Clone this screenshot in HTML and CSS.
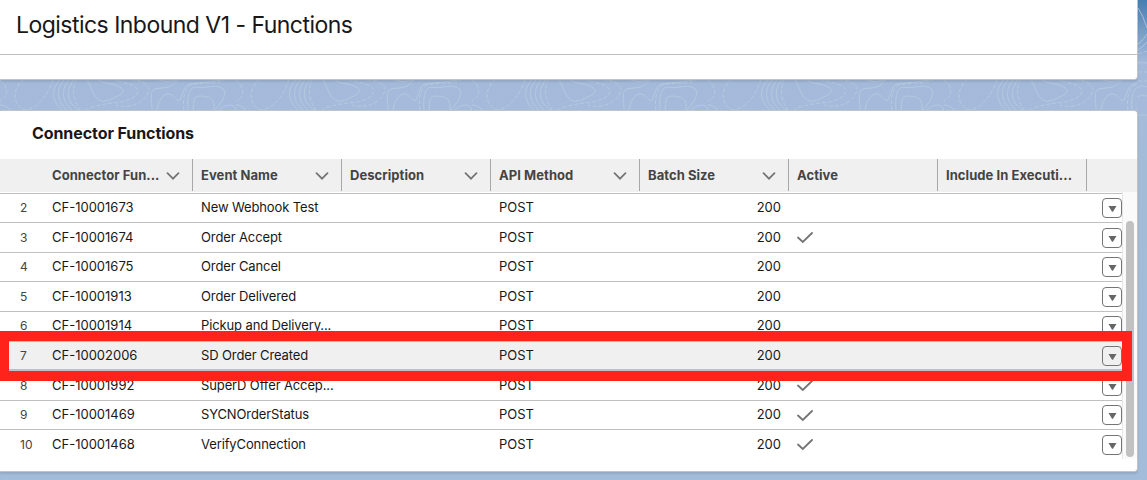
FILE: index.html
```html
<!DOCTYPE html>
<html lang="en">
<head>
    <meta charset="UTF-8">
    <meta name="viewport" content="width=device-width, initial-scale=1.0">
    <title>Logistics Inbound V1 - Functions</title>
    <link rel="stylesheet" href="styles.css">
</head>
<body>
    <!-- Contour line background -->
    <svg class="contours" width="1147" height="140">
        <defs>
            <pattern id="contour" width="236" height="120" patternUnits="userSpaceOnUse">
                <g fill="none" stroke="#b5cade" stroke-width="0.9">
                    <path d="M61 79C51 87 51 101 62 110M65 79C56 88 56 101 67 110M70 79C61 88 61 101 72 110M75 79C66 88 65 102 79 110"/>
                    <path d="M87 79C91 86 93 98 101 101C109 102 112 98 118 96C128 91 122 87 112 84C104 83 101 82 98 79"/>
                    <path d="M152 110C152 100 149 91 155 89C163 87 171 90 178 79M157 110C158 102 162 94 169 94C175 95 177 103 180 100C184 92 183 86 190 84C203 82 215 82 224 79"/>
                    <path d="M188 110C187 99 188 88 195 87C203 89 212 85 220 87C230 91 222 102 215 110M193 110C194 100 193 96 200 96C208 97 215 96 214 110"/>
                    <path d="M219 110C226 103 235 104 236 110M0 105C5 105 8 108 10 110M157 79C165 83 173 82 177 79"/>
                    <g stroke-dasharray="4 2">
                        <path d="M24 79C13 86 11 105 25 110C38 109 49 94 53 79M77 79C71 88 73 100 80 110M112 79C121 83 136 83 138 91C138 98 123 103 111 103C99 105 90 107 86 110M125 79C140 80 149 83 149 90C145 105 126 109 116 105"/>
                        <path d="M184 110C182 100 185 87 191 85C207 81 216 86 226 79M0 80C10 88 8 97 0 101"/>
                    </g>
                </g>
            </pattern>
        </defs>
        <rect width="1137" height="111" fill="url(#contour)"/>
        <g fill="none" stroke="#b5cade" stroke-width="0.8">
            <path d="M1138 8Q1143 15 1147 28M1138 44Q1144 40 1147 34M1138 50Q1144 46 1147 42M1138 63Q1142 62 1147 63M1137 88Q1142 84 1147 87M1137 97Q1142 94 1147 96M1138 115H1147"/>
            <path stroke-dasharray="4 2" d="M1138 54L1147 51M1138 72H1147M1138 81H1147"/>
        </g>
    </svg>

    <!-- Page Header -->
    <header class="page-header">
        <h1>Logistics Inbound V1 - Functions</h1>
    </header>

    <!-- Connector Functions -->
    <section class="card">
        <h2>Connector Functions</h2>
        <div class="row table-head">
            <span class="cell"></span>
            <span class="cell">Connector Fun...<svg class="chevron" viewBox="0 0 14 8"><path d="M1.5 1.2L7 6.7L12.5 1.2"/></svg></span>
            <span class="cell">Event Name<svg class="chevron" viewBox="0 0 14 8"><path d="M1.5 1.2L7 6.7L12.5 1.2"/></svg></span>
            <span class="cell">Description<svg class="chevron" viewBox="0 0 14 8"><path d="M1.5 1.2L7 6.7L12.5 1.2"/></svg></span>
            <span class="cell">API Method<svg class="chevron" viewBox="0 0 14 8"><path d="M1.5 1.2L7 6.7L12.5 1.2"/></svg></span>
            <span class="cell">Batch Size<svg class="chevron" viewBox="0 0 14 8"><path d="M1.5 1.2L7 6.7L12.5 1.2"/></svg></span>
            <span class="cell">Active</span>
            <span class="cell">Include In Executi...</span>
            <span class="cell"></span>
        </div>
        <div class="table-body">
            <div class="rows" id="functionList">
                <!-- Rows are added by the script -->
            </div>
            <div class="scrollbar"><div class="thumb"></div></div>
        </div>
    </section>

    <div class="highlight"></div>

    <script>
        const functionList = document.getElementById('functionList');

        const functions = [
            { id: 'CF-10001673', event: 'New Webhook Test', active: false },
            { id: 'CF-10001674', event: 'Order Accept', active: true },
            { id: 'CF-10001675', event: 'Order Cancel', active: false },
            { id: 'CF-10001913', event: 'Order Delivered', active: false },
            { id: 'CF-10001914', event: 'Pickup and Delivery...', active: false },
            { id: 'CF-10002006', event: 'SD Order Created', active: false, selected: true },
            { id: 'CF-10001992', event: 'SuperD Offer Accep...', active: true },
            { id: 'CF-10001469', event: 'SYCNOrderStatus', active: true },
            { id: 'CF-10001468', event: 'VerifyConnection', active: true }
        ];

        const check = '<svg class="check" viewBox="0 0 16 12"><path d="M1 5.5L5.8 10L15 1"/></svg>';

        functions.forEach((item, index) => {
            const row = document.createElement('div');
            row.className = item.selected ? 'row selected' : 'row';
            row.innerHTML = `
                <span class="number">${index + 2}</span>
                <span class="cell">${item.id}</span>
                <span class="cell event">${item.event}</span>
                <span class="cell"></span>
                <span class="cell">POST</span>
                <span class="cell amount">200</span>
                <span class="cell">${item.active ? check : ''}</span>
                <span class="cell"></span>
                <span class="action"><button type="button" aria-label="Show actions"><svg viewBox="0 0 8 6"><path d="M0 0H8L4.6 5.4Q4 6.2 3.4 5.4Z"/></svg></button></span>
            `;
            functionList.appendChild(row);
        });
    </script>
</body>
</html>
```
FILE: styles.css
```css
/* General Reset */
* {
    margin: 0;
    padding: 0;
    box-sizing: border-box;
}

body {
    position: relative;
    height: 480px;
    overflow: hidden;
    font-family: Inter, "Liberation Sans", sans-serif;
    font-size: 13px;
    color: #181818;
    background: linear-gradient(#457fb3 0, #6694c3 22px, #a3b9da 62px, #a6bbdb 110px, #a2bcd8 160px, #a3bcd9 480px);
}

.contours {
    position: absolute;
    top: 0;
    left: 0;
}

/* Page Header */
.page-header {
    position: relative;
    width: 1138px;
    height: 80px;
    background: #fff;
    border: 1px solid #c3c3c3;
    border-width: 0 1px 1px 0;
    border-radius: 0 0 4px 0;
    box-shadow: 0 2px 2px rgba(0, 0, 0, 0.1);
}

.page-header h1 {
    height: 55px;
    padding-left: 16px;
    border-bottom: 1px solid #c0c0c0;
    font-size: 23px;
    font-weight: 400;
    line-height: 50px;
    letter-spacing: -0.53px;
}

/* Card */
.card {
    position: relative;
    width: 1138px;
    height: 362px;
    margin-top: 30px;
    background: #fff;
    border: 1px solid #c3c3c3;
    border-left: none;
    border-radius: 0 4px 4px 0;
    box-shadow: 0 2px 2px rgba(0, 0, 0, 0.1);
}

.card h2 {
    height: 48px;
    padding-left: 32px;
    font-size: 16px;
    font-weight: 700;
    line-height: 45px;
    letter-spacing: -0.08px;
}

/* Table */
.row {
    display: grid;
    grid-template-columns: 44px repeat(7, 149px) 1fr;
    align-items: center;
    height: 29.55px;
    border-top: 1px solid #c0c0c0;
}

.cell {
    padding: 0 8px;
    white-space: nowrap;
}

.rows .cell {
    margin-bottom: 1.66px;
    line-height: 16px;
}

.table-head {
    height: 33px;
    align-items: start;
    border-top: none;
    background: #f0f0f0;
    color: #444;
    font-weight: 700;
    letter-spacing: 0.06px;
}

.table-head .cell {
    display: flex;
    align-items: center;
    justify-content: space-between;
    height: 32px;
    padding-right: 12px;
    border-right: 1px solid #a8a8a8;
}

.table-head .cell:first-child,
.table-head .cell:last-child {
    border-right: none;
}

.chevron {
    width: 14px;
    height: 8px;
    margin-top: 1px;
    fill: none;
    stroke: #747474;
    stroke-width: 1.7;
    stroke-linecap: round;
}

.table-body {
    display: flex;
    height: 267px;
}

.rows {
    width: 1122px;
    padding-top: 0.8px;
}

.rows .row.selected {
    background: #f0f0f0;
    box-shadow: inset 0 -1px #c0c0c0;
}

.number {
    margin-top: 0.34px;
    padding-left: 20px;
    font-size: 12px;
    line-height: 16px;
    color: #444;
}

.event {
    letter-spacing: -0.12px;
}

.amount {
    text-align: right;
}

.check {
    display: block;
    width: 16px;
    height: 12px;
    margin-top: 3px;
    fill: none;
    stroke: #747474;
    stroke-width: 1.8;
    stroke-linecap: round;
}

.action {
    display: flex;
    justify-content: flex-end;
    margin-top: 0.36px;
}

.action button {
    display: flex;
    align-items: center;
    justify-content: center;
    width: 20px;
    height: 20px;
    padding-top: 2px;
    border: 1px solid #747474;
    border-radius: 4px;
    background: #fff;
}

.selected button {
    background: transparent;
}

.action svg {
    width: 9px;
    height: 6px;
    fill: #666;
}

.scrollbar {
    flex: 1;
    padding: 29px 3px 2px 3px;
    background: #fafafa;
    border-left: 1px solid #e8e8e8;
}

.thumb {
    width: 8px;
    height: 236px;
    border-radius: 4px;
    background: #c1c1c1;
}

/* Red frame over the selected function */
.highlight {
    position: absolute;
    top: 331px;
    left: -1px;
    width: 1133px;
    height: 50px;
    border: 10px solid #ff231c;
}
```
